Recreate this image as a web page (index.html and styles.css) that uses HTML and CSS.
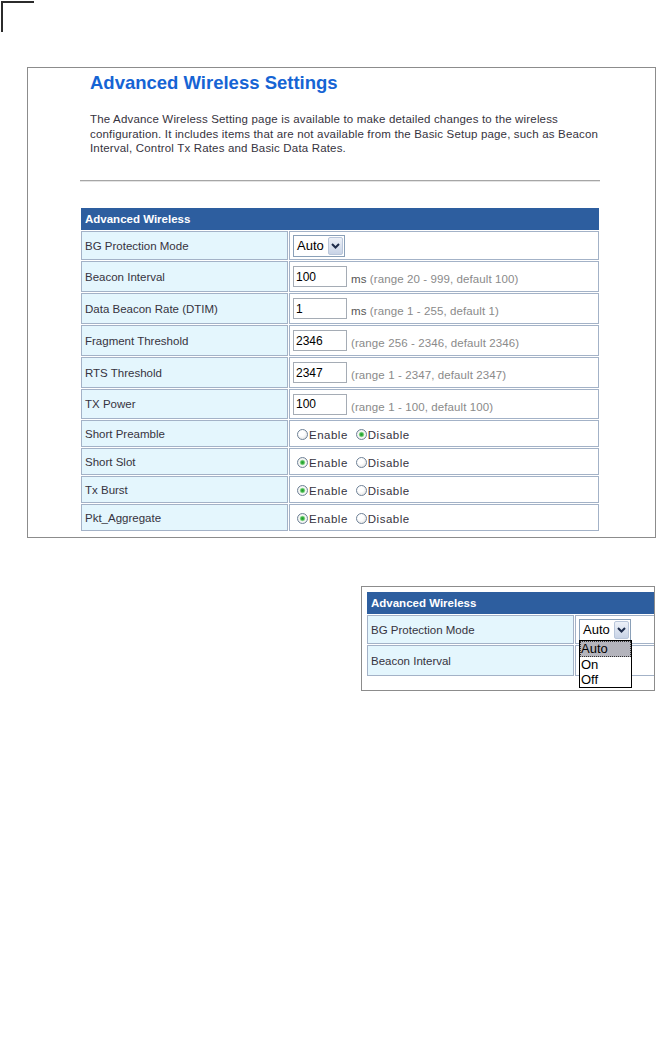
FILE: index.html
```html
<!DOCTYPE html>
<html lang="en">
<head>
    <meta charset="UTF-8">
    <meta name="viewport" content="width=device-width, initial-scale=1.0">
    <title>Advanced Wireless Settings</title>
    <link rel="stylesheet" href="styles.css">
</head>
<body>
    <div class="crop"></div>

    <div class="shot shot-main">
        <div class="page">
            <h1 class="title">Advanced Wireless Settings</h1>
            <p class="intro">The Advance Wireless Setting page is available to make detailed changes to the wireless<br>configuration. It includes items that are not available from the Basic Setup page, such as Beacon<br>Interval, Control Tx Rates and Basic Data Rates.</p>
            <div class="rule"></div>

            <table class="settings">
                <tr class="head"><td colspan="2">Advanced Wireless</td></tr>
                <tr class="r-select">
                    <td class="label">BG Protection Mode</td>
                    <td class="value">
                        <div class="select">
                            <span class="select-text">Auto</span>
                            <span class="select-btn"><svg width="9" height="6" viewBox="0 0 9 6"><path d="M1 1 L4.5 4.5 L8 1" fill="none" stroke="#1d2b4a" stroke-width="2"/></svg></span>
                        </div>
                    </td>
                </tr>
                <tr class="r-text">
                    <td class="label">Beacon Interval</td>
                    <td class="value"><div class="field"><input class="num" type="text" value="100"><span class="hint"><span class="unit">ms</span> (range 20 - 999, default 100)</span></div></td>
                </tr>
                <tr class="r-text">
                    <td class="label">Data Beacon Rate (DTIM)</td>
                    <td class="value"><div class="field"><input class="num" type="text" value="1"><span class="hint"><span class="unit">ms</span> (range 1 - 255, default 1)</span></div></td>
                </tr>
                <tr class="r-text">
                    <td class="label">Fragment Threshold</td>
                    <td class="value"><div class="field"><input class="num" type="text" value="2346"><span class="hint">(range 256 - 2346, default 2346)</span></div></td>
                </tr>
                <tr class="r-text">
                    <td class="label">RTS Threshold</td>
                    <td class="value"><div class="field"><input class="num" type="text" value="2347"><span class="hint">(range 1 - 2347, default 2347)</span></div></td>
                </tr>
                <tr class="r-text r-last">
                    <td class="label">TX Power</td>
                    <td class="value"><div class="field"><input class="num" type="text" value="100"><span class="hint">(range 1 - 100, default 100)</span></div></td>
                </tr>
                <tr class="r-radio">
                    <td class="label">Short Preamble</td>
                    <td class="value"><div class="choice"><label class="opt"><input type="radio" name="preamble">Enable</label><label class="opt"><input type="radio" name="preamble" checked>Disable</label></div></td>
                </tr>
                <tr class="r-radio">
                    <td class="label">Short Slot</td>
                    <td class="value"><div class="choice"><label class="opt"><input type="radio" name="slot" checked>Enable</label><label class="opt"><input type="radio" name="slot">Disable</label></div></td>
                </tr>
                <tr class="r-radio">
                    <td class="label">Tx Burst</td>
                    <td class="value"><div class="choice"><label class="opt"><input type="radio" name="burst" checked>Enable</label><label class="opt"><input type="radio" name="burst">Disable</label></div></td>
                </tr>
                <tr class="r-radio">
                    <td class="label">Pkt_Aggregate</td>
                    <td class="value"><div class="choice"><label class="opt"><input type="radio" name="aggr" checked>Enable</label><label class="opt"><input type="radio" name="aggr">Disable</label></div></td>
                </tr>
            </table>
        </div>
    </div>

    <div class="shot shot-menu">
        <table class="settings">
            <tr class="head"><td colspan="2">Advanced Wireless</td></tr>
            <tr class="r-select">
                <td class="label">BG Protection Mode</td>
                <td class="value">
                    <div class="select">
                        <span class="select-text">Auto</span>
                        <span class="select-btn"><svg width="9" height="6" viewBox="0 0 9 6"><path d="M1 1 L4.5 4.5 L8 1" fill="none" stroke="#1d2b4a" stroke-width="2"/></svg></span>
                        <ul class="menu">
                            <li class="active">Auto</li>
                            <li>On</li>
                            <li>Off</li>
                        </ul>
                    </div>
                </td>
            </tr>
            <tr class="r-text">
                <td class="label">Beacon Interval</td>
                <td class="value"></td>
            </tr>
        </table>
    </div>
</body>
</html>
```

FILE: styles.css
```css
body {
    margin: 0;
    font-family: "Liberation Sans", Arial, sans-serif;
    color: #333;
    background: #fff;
}

.crop {
    width: 31px;
    height: 29px;
    margin: 1px 0 0 1px;
    border-top: 2px solid #2b2b2b;
    border-left: 2px solid #2b2b2b;
}

.shot {
    box-sizing: border-box;
    border: 1px solid #8c8c8c;
}

.shot-main {
    margin: 35px 0 0 27px;
    width: 629px;
    height: 471px;
}

.page {
    margin-left: 52px;
    width: 520px;
    padding-top: 4px;
}

.title {
    margin: 0;
    padding-left: 10px;
    font-size: 18.5px;
    line-height: 22px;
    font-weight: bold;
    color: #1664d4;
}

.intro {
    margin: 18px 0 0;
    padding-left: 10px;
    height: 44px;
    font-size: 11.5px;
    line-height: 14.5px;
    letter-spacing: 0.17px;
    white-space: nowrap;
    color: #363340;
}

.rule {
    margin-top: 24px;
    border-top: 1px solid #a6a6a6;
    border-bottom: 1px solid #e4e4e4;
}

/* settings table */
.settings {
    border-collapse: separate;
    border-spacing: 1px;
    width: 520px;
    margin-top: 25px;
    font-size: 11.5px;
}

.settings td {
    box-sizing: border-box;
    border: 1px solid #a3b2c7;
    padding: 0 3px;
}

.settings .head td {
    height: 22px;
    background: #2d5e9f;
    border-color: #2d5e9f;
    color: #fff;
    font-weight: bold;
}

.settings .label {
    width: 207px;
    background: #e4f6fd;
    color: #363340;
}

.settings .value {
    background: #fff;
}

.r-select td { height: 29px; }
.r-text td { height: 31px; }
.r-text.r-last td { height: 30px; }
.r-radio td { height: 27px; }

.field {
    display: flex;
    align-items: center;
}

.num {
    box-sizing: border-box;
    width: 54px;
    height: 21px;
    margin: 0;
    padding: 0 2px;
    border: 1px solid #a5acb5;
    font-family: "Liberation Sans", Arial, sans-serif;
    font-size: 12px;
    color: #000;
    outline: none;
}

.hint {
    margin-left: 4px;
    padding-top: 5px;
    letter-spacing: 0.1px;
    color: #8a8a8a;
}

.unit {
    color: #555;
}

/* radios */
.choice {
    display: flex;
    align-items: center;
    padding-top: 2px;
}

.opt {
    display: flex;
    align-items: center;
    letter-spacing: 0.5px;
    color: #363340;
}

.opt + .opt {
    margin-left: 4px;
}

.opt input {
    appearance: none;
    -webkit-appearance: none;
    box-sizing: border-box;
    width: 11px;
    height: 11px;
    margin: 0 1px 0 4px;
    border: 1px solid #6f8297;
    border-radius: 50%;
    background: radial-gradient(circle at 40% 35%, #fff 0, #fff 35%, #d9d9d9 100%);
}

.opt input:checked {
    background: radial-gradient(circle, #1f9a2a 0, #3fb548 1.5px, #a8e2a8 2.5px, #fafafa 3.2px, #ececec 70%, #d4d4d4 100%);
}

/* select look-alike */
.select {
    position: relative;
    display: flex;
    box-sizing: border-box;
    width: 52px;
    height: 22px;
    border: 1px solid #8aa0b8;
    background: #fff;
}

.select-text {
    flex: 1;
    padding-left: 3px;
    font-size: 13px;
    line-height: 20px;
    color: #000;
}

.select-btn {
    display: flex;
    align-items: center;
    justify-content: center;
    box-sizing: border-box;
    width: 15px;
    margin: 1px;
    border: 1px solid #b9c6da;
    border-radius: 2px;
    background: linear-gradient(#edf1f8, #c8d3e6);
}

/* second shot: opened list */
.shot-menu {
    margin: 48px 0 0 361px;
    width: 294px;
    height: 105px;
    padding: 4px 0 0 4px;
    overflow: hidden;
}

.shot-menu .settings {
    margin-top: 0;
}

.menu {
    position: absolute;
    top: 20px;
    left: -1px;
    width: 53px;
    margin: 0;
    padding: 0;
    list-style: none;
    box-sizing: border-box;
    border: 1px solid #000;
    background: #fff;
    font-size: 13px;
    color: #000;
}

.menu li {
    height: 15px;
    line-height: 15px;
    padding-left: 1px;
}

.menu li.active {
    height: 16px;
    background: #b4b4bc;
    outline: 1px dotted #333;
    outline-offset: -1px;
}
```
